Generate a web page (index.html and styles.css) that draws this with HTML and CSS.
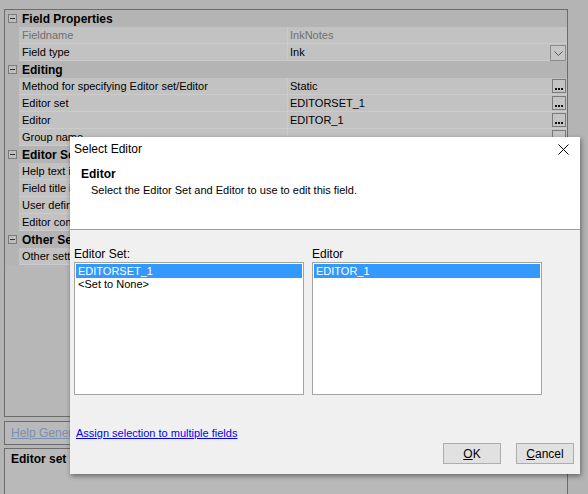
FILE: index.html
```html
<!DOCTYPE html>
<html>
<head>
<meta charset="utf-8">
<link rel="stylesheet" href="styles.css">
</head>
<body>
<div class="app">
  <div class="grid">
    <div class="cat"><span class="toggle"></span><span class="cat-label">Field Properties</span></div>
    <div class="row"><div class="gutter"></div><div class="name muted">Fieldname</div><div class="value muted">InkNotes</div></div>
    <div class="row"><div class="gutter"></div><div class="name">Field type</div><div class="value">Ink<span class="drop"><svg width="9" height="5" viewBox="0 0 9 5"><path d="M0.5 0.5 L4.5 4.5 L8.5 0.5" fill="none" stroke="#5a5a5a" stroke-width="1"/></svg></span></div></div>
    <div class="cat"><span class="toggle"></span><span class="cat-label">Editing</span></div>
    <div class="row"><div class="gutter"></div><div class="name">Method for specifying Editor set/Editor</div><div class="value">Static<span class="dots"><i></i><i></i><i></i></span></div></div>
    <div class="row"><div class="gutter"></div><div class="name">Editor set</div><div class="value">EDITORSET_1<span class="dots"><i></i><i></i><i></i></span></div></div>
    <div class="row"><div class="gutter"></div><div class="name">Editor</div><div class="value">EDITOR_1<span class="dots"><i></i><i></i><i></i></span></div></div>
    <div class="row"><div class="gutter"></div><div class="name">Group name</div><div class="value"><span class="dots"><i></i><i></i><i></i></span></div></div>
    <div class="cat"><span class="toggle"></span><span class="cat-label">Editor Settings</span></div>
    <div class="row"><div class="gutter"></div><div class="name">Help text in editor</div><div class="value"></div></div>
    <div class="row"><div class="gutter"></div><div class="name">Field title in editor</div><div class="value"></div></div>
    <div class="row"><div class="gutter"></div><div class="name">User defined editor</div><div class="value"></div></div>
    <div class="row"><div class="gutter"></div><div class="name">Editor comments</div><div class="value"></div></div>
    <div class="cat"><span class="toggle"></span><span class="cat-label">Other Settings</span></div>
    <div class="row"><div class="gutter"></div><div class="name">Other settings</div><div class="value"></div></div>
  </div>
  <div class="helpbar"><a class="help-link">Help Generator</a></div>
  <div class="desc"><b>Editor set</b></div>
</div>

<div class="dialog">
  <div class="dlg-head">
    <div class="titlebar">
      <span class="title">Select Editor</span>
      <svg class="close" width="11" height="11" viewBox="0 0 11 11"><path d="M0.5 0.5 L10.5 10.5 M10.5 0.5 L0.5 10.5" stroke="#000" stroke-width="1"/></svg>
    </div>
    <div class="heading">Editor</div>
    <div class="subtext">Select the Editor Set and Editor to use to edit this field.</div>
  </div>
  <div class="dlg-body">
    <div class="lists">
      <div class="col">
        <div class="label">Editor Set:</div>
        <div class="listbox">
          <div class="item sel">EDITORSET_1</div>
          <div class="item">&lt;Set to None&gt;</div>
        </div>
      </div>
      <div class="col">
        <div class="label">Editor</div>
        <div class="listbox">
          <div class="item sel">EDITOR_1</div>
        </div>
      </div>
    </div>
    <a class="assign">Assign selection to multiple fields</a>
    <div class="buttons">
      <button class="btn"><u>O</u>K</button>
      <button class="btn"><u>C</u>ancel</button>
    </div>
  </div>
</div>
</body>
</html>
```

FILE: styles.css
```css
html, body {
  margin: 0;
  padding: 0;
}

body {
  width: 588px;
  height: 494px;
  overflow: hidden;
  background: #b4b4b4;
  font-family: "Liberation Sans", Arial, sans-serif;
  font-size: 11px;
  color: #000;
  position: relative;
}

.app {
  padding: 9px 20px 0 4px;
  display: flex;
  flex-direction: column;
}

/* property grid */
.grid {
  height: 406px;
  border: 1px solid #6c6c6c;
  background: #b7b7b7;
  display: flex;
  flex-direction: column;
  flex-shrink: 0;
}

.cat {
  height: 17px;
  display: flex;
  align-items: center;
  background: #b4b4b4;
}

.toggle {
  width: 7px;
  height: 7px;
  border: 1px solid #7a7a7a;
  margin-left: 3px;
  margin-right: 5px;
  position: relative;
  background: #bdbdbd;
}

.toggle::after {
  content: "";
  position: absolute;
  left: 1px;
  top: 3px;
  width: 5px;
  height: 1px;
  background: #333;
}

.cat-label {
  font-weight: bold;
  font-size: 12px;
}

.row {
  height: 17px;
  display: flex;
}

.gutter {
  width: 14px;
  background: #b4b4b4;
}

.name {
  width: 265px;
  padding-left: 3px;
  background: #c2c2c2;
  border-bottom: 1px solid #cbcbcb;
  border-right: 1px solid #cbcbcb;
  line-height: 16px;
  white-space: nowrap;
  overflow: hidden;
}

.value {
  flex: 1;
  padding-left: 2px;
  background: #c2c2c2;
  border-bottom: 1px solid #cbcbcb;
  line-height: 16px;
  display: flex;
  justify-content: space-between;
  align-items: center;
  padding-right: 1px;
}

.muted {
  color: #707070;
}

.drop {
  width: 14px;
  height: 14px;
  border: 1px solid #8c8c8c;
  background: #c6c6c6;
  display: flex;
  align-items: center;
  justify-content: center;
  margin-top: 2px;
}

.dots {
  width: 14px;
  height: 14px;
  border: 1px solid #7a7a7a;
  background: #c4c4c4;
  display: flex;
  align-items: flex-end;
  justify-content: center;
  gap: 1px;
  padding-bottom: 2px;
  box-sizing: border-box;
  margin-left: auto;
}

.dots i {
  width: 2px;
  height: 2px;
  background: #111;
}

.helpbar {
  margin-top: 4px;
  height: 22px;
  border: 1px solid #6c6c6c;
  background: #b9b9b9;
  display: flex;
  align-items: center;
  padding-left: 6px;
  flex-shrink: 0;
}

.help-link {
  color: #7b8fb0;
  text-decoration: underline;
  font-size: 12px;
}

.desc {
  margin-top: 3px;
  height: 60px;
  border: 1px solid #6c6c6c;
  background: #b9b9b9;
  padding: 3px 0 0 6px;
  font-size: 12px;
  flex-shrink: 0;
}

/* modal dialog */
.dialog {
  position: absolute;
  left: 70px;
  top: 137px;
  width: 510px;
  height: 337px;
  background: #f0f0f0;
  box-shadow: 1px 2px 5px rgba(0, 0, 0, 0.45);
  display: flex;
  flex-direction: column;
  font-size: 12px;
}

.dlg-head {
  background: #fff;
  height: 92px;
  border-bottom: 1px solid #a0a0a0;
  flex-shrink: 0;
}

.titlebar {
  height: 24px;
  display: flex;
  align-items: center;
  justify-content: space-between;
  padding: 0 11px 0 4px;
}

.title {
  font-size: 12px;
}

.heading {
  font-weight: bold;
  margin: 6px 0 0 11px;
}

.subtext {
  margin: 3px 0 0 21px;
  font-size: 11px;
}

.dlg-body {
  flex: 1;
  padding: 17px 6px 10px 4px;
  display: flex;
  flex-direction: column;
}

.lists {
  display: flex;
  gap: 8px;
  flex-shrink: 0;
}

.col {
  width: 230px;
}

.label {
  line-height: 15px;
}

.listbox {
  box-sizing: border-box;
  height: 133px;
  border: 1px solid #a3a3a3;
  background: #fff;
  padding: 1px;
}

.item {
  height: 13px;
  line-height: 13px;
  padding-left: 2px;
  font-size: 11px;
}

.item.sel {
  background: #3399ff;
  color: #fff;
  height: 14px;
  line-height: 14px;
}

.assign {
  margin-top: 31px;
  margin-left: 2px;
  color: #0000ff;
  text-decoration: underline;
  font-size: 11px;
  line-height: 14px;
  align-self: flex-start;
}

.buttons {
  margin-top: auto;
  display: flex;
  justify-content: flex-end;
  gap: 15px;
}

.btn {
  width: 58px;
  height: 21px;
  border: 1px solid #adadad;
  background: #e1e1e1;
  font-family: inherit;
  font-size: 12px;
  padding: 0;
  color: #000;
}
```
